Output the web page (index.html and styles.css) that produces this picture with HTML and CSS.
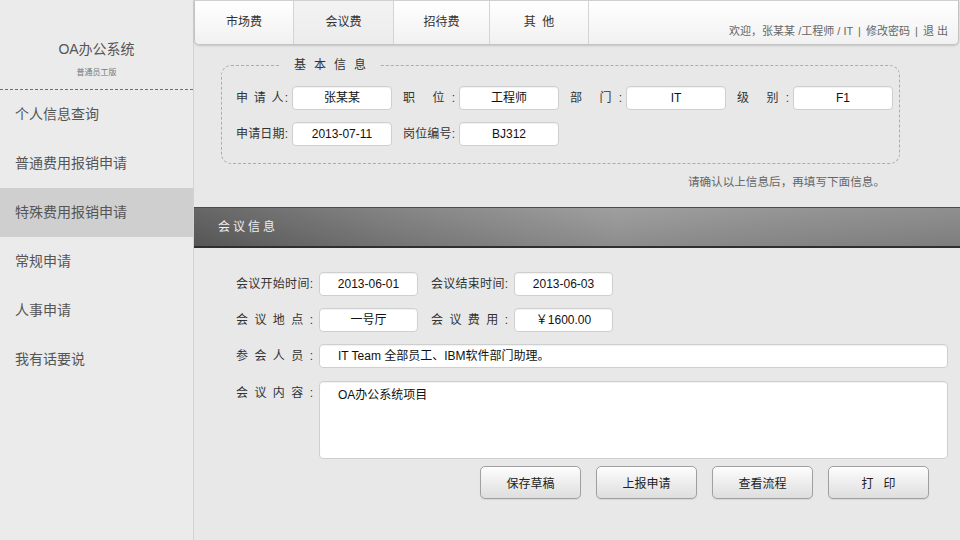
FILE: index.html
```html
<!DOCTYPE html>
<html lang="zh-CN">
<head>
<meta charset="utf-8">
<title>OA办公系统</title>
<link rel="stylesheet" href="styles.css">
</head>
<body>
<div class="app">
  <aside class="sidebar">
    <div class="brand">
      <div class="brand-title">OA办公系统</div>
      <div class="brand-sub">普通员工版</div>
    </div>
    <nav class="menu">
      <a class="menu-item">个人信息查询</a>
      <a class="menu-item">普通费用报销申请</a>
      <a class="menu-item active">特殊费用报销申请</a>
      <a class="menu-item">常规申请</a>
      <a class="menu-item">人事申请</a>
      <a class="menu-item">我有话要说</a>
    </nav>
  </aside>
  <main class="main">
    <header class="topbar">
      <nav class="tabs">
        <a class="tab t1">市场费</a>
        <a class="tab t2 active">会议费</a>
        <a class="tab t3">招待费</a>
        <a class="tab t4">其&nbsp;&nbsp;他</a>
      </nav>
      <div class="userbar">欢迎，张某某 /工程师 / IT <span class="sep">|</span> 修改密码 <span class="sep">|</span> 退&nbsp;出</div>
    </header>

    <fieldset class="basic">
      <legend class="basic-legend">基本信息</legend>
      <div class="basic-row">
        <span class="blabel">申 请 人:</span><span class="field">张某某</span>
        <span class="blabel">职 位:</span><span class="field">工程师</span>
        <span class="blabel">部 门:</span><span class="field">IT</span>
        <span class="blabel">级 别:</span><span class="field">F1</span>
      </div>
      <div class="basic-row">
        <span class="blabel">申请日期:</span><span class="field">2013-07-11</span>
        <span class="blabel">岗位编号:</span><span class="field">BJ312</span>
      </div>
    </fieldset>
    <p class="note">请确认以上信息后，再填写下面信息。</p>

    <div class="section-bar">会议信息</div>

    <div class="meeting">
      <div class="mrow">
        <span class="mlabel">会议开始时间:</span><span class="field mfield">2013-06-01</span>
        <span class="mlabel second">会议结束时间:</span><span class="field mfield">2013-06-03</span>
      </div>
      <div class="mrow">
        <span class="mlabel">会 议 地 点 :</span><span class="field mfield">一号厅</span>
        <span class="mlabel second">会 议 费 用 :</span><span class="field mfield">￥1600.00</span>
      </div>
      <div class="mrow">
        <span class="mlabel">参 会 人 员 :</span><span class="field wide">IT Team 全部员工、IBM软件部门助理。</span>
      </div>
      <div class="mrow top">
        <span class="mlabel tall">会 议 内 容 :</span><span class="field area">OA办公系统项目</span>
      </div>
      <div class="actions">
        <button class="btn">保存草稿</button>
        <button class="btn">上报申请</button>
        <button class="btn">查看流程</button>
        <button class="btn">打&nbsp;&nbsp;&nbsp;印</button>
      </div>
    </div>
  </main>
</div>
</body>
</html>
```

FILE: styles.css
```css
* { box-sizing: border-box; }
html, body { margin: 0; padding: 0; }
body {
  width: 960px;
  height: 540px;
  overflow: hidden;
  font-family: "Liberation Sans", "Noto Sans CJK SC", sans-serif;
  color: #333;
  background: #e8e8e8;
}
.app { display: flex; height: 540px; }

/* Sidebar */
.sidebar {
  width: 194px;
  flex: none;
  background: #ebebeb;
  border-right: 1px solid #d3d3d3;
}
.brand {
  height: 90px;
  padding-top: 40px;
  text-align: center;
  border-bottom: 1px dashed #6e6e6e;
}
.brand-title { font-size: 14px; line-height: 18px; color: #555; }
.brand-sub { font-size: 8px; line-height: 12px; margin-top: 9px; color: #777; }
.menu { display: flex; flex-direction: column; }
.menu-item {
  display: block;
  height: 49px;
  line-height: 49px;
  padding-left: 15px;
  font-size: 14px;
  color: #555;
}
.menu-item.active { background: #cfcfcf; }

/* Main */
.main { flex: 1; min-width: 0; }
.topbar {
  height: 45px;
  margin-right: 1px;
  display: flex;
  border: 1px solid #c3c3c3;
  border-top-color: #d0d0d0;
  border-radius: 0 0 5px 5px;
  background: linear-gradient(#ffffff, #f1f1f1);
  box-shadow: 0 1px 2px rgba(0,0,0,0.15);
}
.tabs { display: flex; }
.tab {
  display: block;
  text-align: center;
  line-height: 43px;
  font-size: 12px;
  color: #333;
  border-right: 1px solid #d4d4d4;
}
.tab.t1 { width: 99px; }
.tab.t2 { width: 100px; }
.tab.t3 { width: 96px; }
.tab.t4 { width: 99px; }
.tab.active { background: linear-gradient(#f3f3f3, #ececec); }
.userbar {
  margin-left: auto;
  align-self: flex-end;
  font-size: 11px;
  line-height: 14px;
  padding: 0 10px 6px 0;
  color: #666;
}
.sep { margin: 0 2px; }

/* Basic info */
.basic {
  margin: 13px 0 0 27px;
  width: 679px;
  min-width: 0;
  min-inline-size: 0;
  border: 1px dashed #acacac;
  border-radius: 10px;
  padding: 14px 0 17px 14px;
}
.basic-legend {
  margin-left: 44px;
  padding: 0 6px 0 14px;
  font-size: 12px;
  line-height: 14px;
  letter-spacing: 8px;
  color: #333;
}
.basic-row { display: flex; height: 24px; }
.basic-row + .basic-row { margin-top: 12px; }
.blabel {
  width: 52px;
  flex: none;
  margin-right: 4px;
  font-size: 12px;
  line-height: 24px;
  text-align: justify;
  text-align-last: justify;
  color: #333;
}
.field {
  display: block;
  flex: none;
  width: 100px;
  height: 24px;
  margin-right: 11px;
  background: #fff;
  border: 1px solid #cfcfcf;
  border-radius: 4px;
  box-shadow: inset 0 1px 1px rgba(0,0,0,0.06);
  font-size: 12px;
  line-height: 22px;
  text-align: center;
  color: #111;
}
.note {
  margin: 10px 0 0;
  padding-right: 75px;
  text-align: right;
  font-size: 11.6px;
  line-height: 16px;
  color: #666;
}

/* Section bar */
.section-bar {
  margin-top: 17px;
  height: 41px;
  padding-left: 24px;
  line-height: 38px;
  font-size: 12px;
  letter-spacing: 3px;
  color: #f0f0f0;
  border-top: 1px solid #4c4c4c;
  border-bottom: 2px solid #2f2f2f;
  background:
    linear-gradient(rgba(255,255,255,0.06), rgba(0,0,0,0.08)),
    linear-gradient(to right, #5d5d5d 0%, #7c7c7c 25%, #999999 55%, #909090 75%, #888888 100%);
}

/* Meeting form */
.meeting { padding: 24px 0 0 42px; }
.mrow { display: flex; height: 24px; }
.mrow + .mrow { margin-top: 12px; }
.mrow.top { height: 78px; margin-top: 13px; align-items: flex-start; }
.mlabel {
  width: 77px;
  flex: none;
  margin-right: 6px;
  font-size: 12px;
  line-height: 24px;
  text-align: justify;
  text-align-last: justify;
  color: #333;
}
.mlabel.second { margin-left: 2px; }
.mlabel.tall { line-height: 16px; padding-top: 4px; }
.mfield { width: 99px; }
.field.wide { width: 629px; text-align: left; padding-left: 18px; font-size: 12px; }
.field.area {
  width: 629px;
  height: 78px;
  text-align: left;
  padding: 5px 18px;
  line-height: 16px;
}
.actions {
  display: flex;
  gap: 15px;
  margin: 7px 0 0 244px;
}
.btn {
  width: 101px;
  height: 33px;
  padding: 0;
  border: 1px solid #a0a0a0;
  border-radius: 5px;
  background: linear-gradient(#fdfdfd, #dedede);
  box-shadow: inset 0 1px 0 #fff, 0 1px 1px rgba(0,0,0,0.08);
  font-family: "Liberation Sans", "Noto Sans CJK SC", sans-serif;
  font-size: 12px;
  color: #222;
}
```
